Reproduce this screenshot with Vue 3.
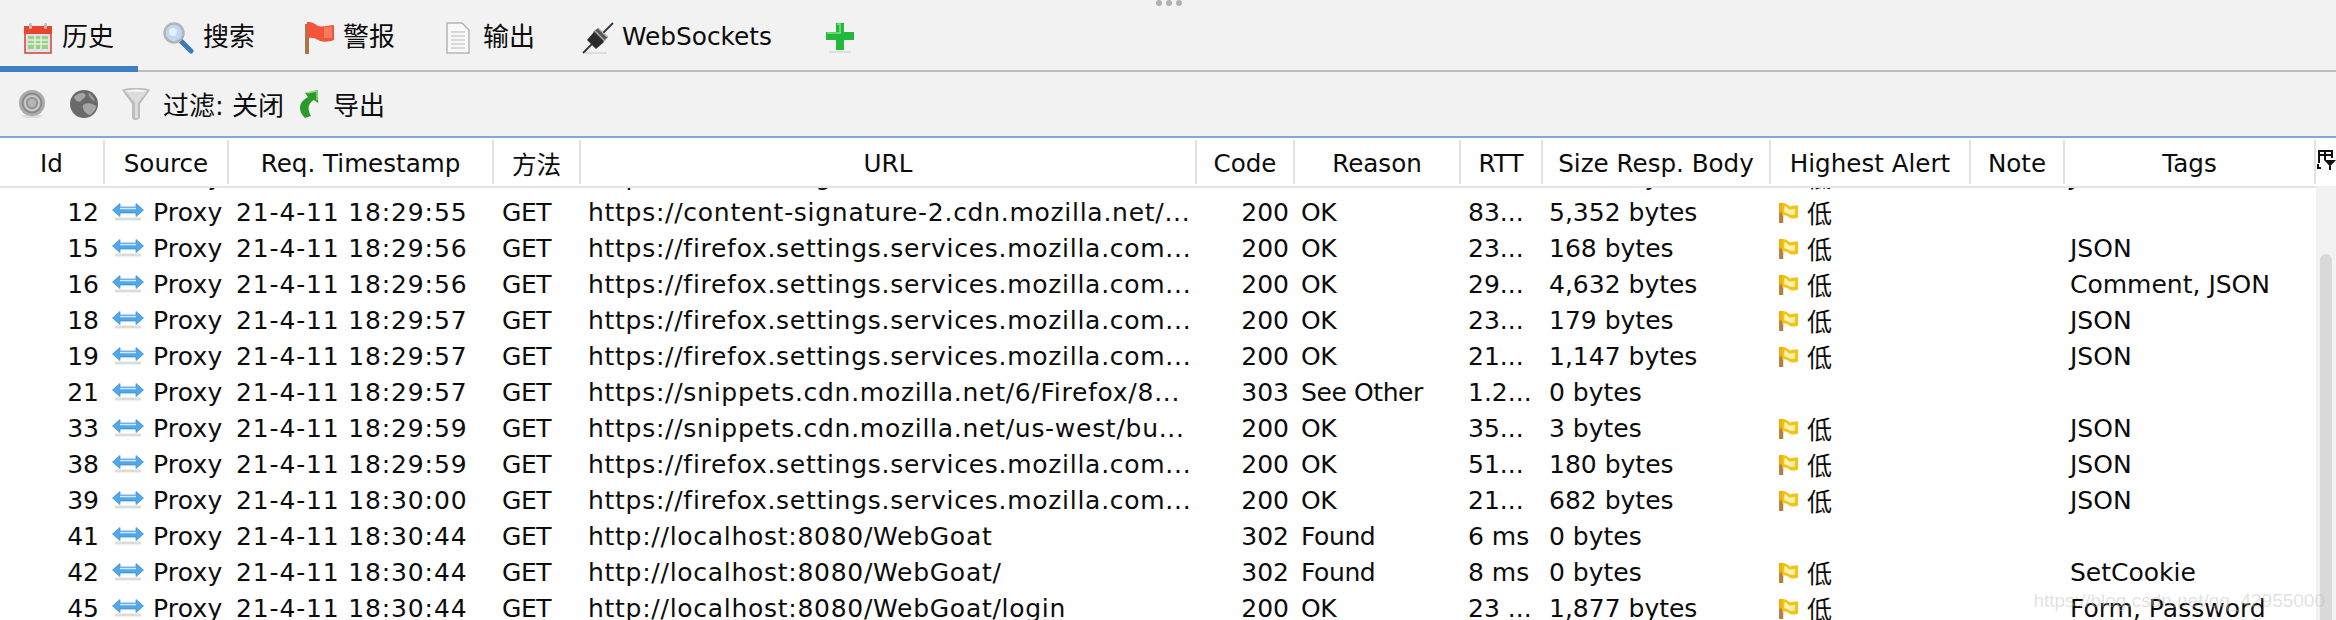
<script setup>
const columns = [
  { label: 'Id', width: 105 }, { label: 'Source', width: 124 }, { label: 'Req. Timestamp', width: 265 },
  { label: '方法', width: 87 }, { label: 'URL', width: 616 }, { label: 'Code', width: 98 },
  { label: 'Reason', width: 166 }, { label: 'RTT', width: 82 }, { label: 'Size Resp. Body', width: 228 },
  { label: 'Highest Alert', width: 200 }, { label: 'Note', width: 94 }, { label: 'Tags', width: 251 },
]
const csu = 'https://content-signature-2.cdn.mozilla.net/...'
const fs = 'https://firefox.settings.services.mozilla.com...'
const rows = [
  ['10', '21-4-11 18:29:55', csu, '200', 'OK', '23...', '5,352 bytes', true, 'JSON'],
  ['12', '21-4-11 18:29:55', csu, '200', 'OK', '83...', '5,352 bytes', true, ''],
  ['15', '21-4-11 18:29:56', fs, '200', 'OK', '23...', '168 bytes', true, 'JSON'],
  ['16', '21-4-11 18:29:56', fs, '200', 'OK', '29...', '4,632 bytes', true, 'Comment, JSON'],
  ['18', '21-4-11 18:29:57', fs, '200', 'OK', '23...', '179 bytes', true, 'JSON'],
  ['19', '21-4-11 18:29:57', fs, '200', 'OK', '21...', '1,147 bytes', true, 'JSON'],
  ['21', '21-4-11 18:29:57', 'https://snippets.cdn.mozilla.net/6/Firefox/8...', '303', 'See Other', '1.2...', '0 bytes', false, ''],
  ['33', '21-4-11 18:29:59', 'https://snippets.cdn.mozilla.net/us-west/bu...', '200', 'OK', '35...', '3 bytes', true, 'JSON'],
  ['38', '21-4-11 18:29:59', fs, '200', 'OK', '51...', '180 bytes', true, 'JSON'],
  ['39', '21-4-11 18:30:00', fs, '200', 'OK', '21...', '682 bytes', true, 'JSON'],
  ['41', '21-4-11 18:30:44', 'http://localhost:8080/WebGoat', '302', 'Found', '6 ms', '0 bytes', false, ''],
  ['42', '21-4-11 18:30:44', 'http://localhost:8080/WebGoat/', '302', 'Found', '8 ms', '0 bytes', true, 'SetCookie'],
  ['45', '21-4-11 18:30:44', 'http://localhost:8080/WebGoat/login', '200', 'OK', '23 ...', '1,877 bytes', true, 'Form, Password'],
]
</script>

<template>
  <div class="app">
    <div class="grip"><i></i><i></i><i></i></div>
    <nav class="tabs">
      <div class="tab t1 active">
        <svg class="ic" viewBox="0 0 28 32"><rect x="1" y="5" width="26" height="26" fill="#dbe6f2" stroke="#d9402c" stroke-width="1.5"/><rect x="0" y="4" width="28" height="8" fill="#e8452c"/><rect x="5" y="1" width="3" height="6" rx="1.500" fill="#bbb"/><rect x="20" y="1" width="3" height="6" rx="1.500" fill="#bbb"/><rect x="4" y="14" width="20" height="13" fill="#9fce8a"/><path d="M4 18h20M4 22h20M11 14v13M17 14v13" stroke="#fff" stroke-width="1"/></svg>
        <span>历史</span>
      </div>
      <div class="tab t2">
        <svg class="ic" viewBox="0 0 32 32"><path d="M18 18l11 11" stroke="#3f78b5" stroke-width="5" stroke-linecap="round"/><circle cx="12" cy="11" r="9.500" fill="#bcd8f5" stroke="#b4b4b4" stroke-width="2.500"/><circle cx="11" cy="10" r="4" fill="#e4f0fc"/></svg>
        <span>搜索</span>
      </div>
      <div class="tab t3">
        <svg class="ic" viewBox="0 0 30 32"><path d="M1 2h4v30H1z" fill="#a9764a"/><path d="M3 0c6 0 8 2 11 4 3 1 8 0 16-1v15c-5 2-10 2-14 1-4-2-6-4-13-3z" fill="#f2553a"/><path d="M20 5h8v11h-8z" fill="#f97a60"/></svg>
        <span>警报</span>
      </div>
      <div class="tab t4">
        <svg class="ic" viewBox="0 0 24 32"><path d="M1 1h15l7 7v23H1z" fill="#f8f8f8" stroke="#b5b5b5" stroke-width="1.500"/><path d="M5 10h14M5 14h14M5 18h14M5 22h14M5 26h14" stroke="#b8b8b8" stroke-width="1.200"/></svg>
        <span>输出</span>
      </div>
      <div class="tab t5">
        <svg class="ic" viewBox="0 0 32 32"><path d="M3 31h22" stroke="#ddd" stroke-width="2"/><path d="M1 31L31 1" stroke="#333" stroke-width="1.800"/><path d="M13 8l5-4 10 9-5 5z" fill="#555" transform="translate(-2 2)"/><path d="M5 18l7-8 10 10-8 7z" fill="#2a2a2a"/><path d="M13 9l10 10M16 6l9 9" stroke="#aaa" stroke-width="1.300"/></svg>
        <span>WebSockets</span>
      </div>
      <div class="tab t6">
        <svg class="ic" viewBox="0 0 28 32"><path d="M3 30h22" stroke="#ddd" stroke-width="2"/><path d="M10 1h8v9h10v8H18v10h-8V18H0v-8h10z" fill="#22b83a"/><path d="M11 2h3v9H1" fill="none" stroke="#7fe08a" stroke-width="1.500"/></svg>
      </div>
    </nav>
    <div class="toolbar">
      <svg class="tic" viewBox="0 0 28 30"><ellipse cx="14" cy="28" rx="11" ry="2" fill="#ddd"/><circle cx="14" cy="14" r="14" fill="#aaa"/><circle cx="14" cy="14" r="11" fill="#8a8a8a"/><circle cx="14" cy="14" r="9" fill="#c6c6c6"/><circle cx="14" cy="14" r="6.500" fill="#8f8f8f"/><circle cx="14" cy="14" r="4.500" fill="#b5b5b5"/></svg>
      <svg class="tic" viewBox="0 0 28 28"><circle cx="14" cy="14" r="14" fill="#6a6a6a"/><path d="M4 7c4-4 8-5 11-3 2 3-2 4-4 7-3 2-6-1-7-4zM13 15c4-3 9-2 13 1 0 4-3 7-6 9-4-1-8-5-7-10z" fill="#a5a5a5"/><path d="M18 3c3 1 6 4 7 8-3 0-6-4-7-8z" fill="#9a9a9a"/></svg>
      <svg class="tic funnel" viewBox="0 0 28 32"><path d="M0 2C5-1 23-1 28 2L18 16v14l-3 2h-3l-2-2V16z" fill="#bdbdbd"/><path d="M3 3c5 2 17 2 22 0L16 15v15h-3V15z" fill="#dcdcdc"/><ellipse cx="14" cy="3" rx="11" ry="1.500" fill="#f2f2f2"/></svg>
      <span class="filter">过滤: 关闭</span>
      <svg class="tic arrow" viewBox="0 0 18 28"><path d="M5 28C-3 20-1 12 8 7L5 3l13-3v13l-4-3C8 13 7 19 11 26z" fill="#2b9a2b"/><path d="M7 3l10-2v9" fill="none" stroke="#8bdc7c" stroke-width="1.500"/></svg>
      <span class="export">导出</span>
    </div>
    <div class="head">
      <div v-for="c in columns" :key="c.label" class="hcell" :style="{ width: c.width + 'px' }">{{ c.label }}</div>
      <svg class="cols" viewBox="0 0 19 20"><path d="M2 13V1h13v7M2 5h13M8 1v9M1 14v4h3" fill="none" stroke="#111" stroke-width="2"/><path d="M7 10h12l-6 6.500z" fill="#111"/><path d="M12 16h2v4h-2z" fill="#111"/></svg>
    </div>
    <div class="sep"></div>
    <div class="body">
      <div class="rows">
        <div v-for="r in rows" :key="r[0]" class="row">
          <div class="c id">{{ r[0] }}</div>
          <div class="c src">
            <svg class="arr" viewBox="0 0 32 18"><path d="M3 16h26" stroke="#ddd" stroke-width="3"/><path d="M.5 7L8 .5V4h16V.5L31.500 7 24 13.500V10H8v3.500z" fill="#4fa8ee" stroke="#3d86c8" stroke-width=".7"/><path d="M8 5.500h16" stroke="#cfe9ff" stroke-width="1.600"/></svg><span class="px">Proxy</span>
          </div>
          <div class="c ts">{{ r[1] }}</div>
          <div class="c me">GET</div>
          <div class="c url">{{ r[2] }}</div>
          <div class="c code">{{ r[3] }}</div>
          <div class="c rea">{{ r[4] }}</div>
          <div class="c rtt">{{ r[5] }}</div>
          <div class="c size">{{ r[6] }}</div>
          <div class="c alert">
            <template v-if="r[7]">
              <svg class="flag" viewBox="0 0 20 20"><path d="M1 1h4v19H1z" fill="#b5803f"/><path d="M1 1h4v9H1z" fill="#eeb20e"/><path d="M4 1c3 0 5 1 7 3 2 0 5-1 8-1v12c-3 1-6 1-8 0-2-2-4-3-7-2z" fill="#f3c30f"/><path d="M6 4c2 0 3 1 4 3 2 .5 4 0 6-.5V12c-2 .5-4 .5-6-.5-1-1-2-1.500-4-1.500z" fill="#fff3b5"/></svg><span>低</span>
            </template>
          </div>
          <div class="c note"></div>
          <div class="c tags">{{ r[8] }}</div>
        </div>
      </div>
      <div class="track"><div class="thumb"></div></div>
    </div>
    <div class="wm">https://blog.csdn.net/qq_42955000</div>
  </div>
</template>

<style>
html, body { margin: 0; background: #fff; }
</style>

<style scoped>
.app { position: relative; width: 2336px; height: 620px; overflow: hidden; background: #f2f2f2; display: flex; flex-direction: column; font-family: "DejaVu Sans", "Noto Sans CJK SC", sans-serif; color: #0c0c0c; font-size: 25px; }
.grip { position: absolute; left: 1156px; top: 0; display: flex; gap: 4px; }
.grip i { width: 6px; height: 6px; border-radius: 50%; background: #b0b0b0; }
.tabs { height: 72px; box-sizing: border-box; border-bottom: 2px solid #bdbdbd; display: flex; align-items: flex-start; padding-top: 22px; font-size: 26px; }
.tab { display: flex; align-items: center; height: 32px; flex: none; box-sizing: border-box; position: relative; }
.tab span { line-height: 30px; margin-bottom: 2px; }
.tab .ic { height: 32px; flex: none; }
.tab.active::after { content: ""; position: absolute; left: 0; right: 0; top: 44px; height: 6px; background: #3f7fc4; }
.t1 { width: 138px; padding-left: 24px; gap: 10px; }
.t1 .ic { width: 28px; }
.t2 { width: 141px; padding-left: 24px; gap: 9px; }
.t2 .ic { width: 32px; }
.t3 { width: 139px; padding-left: 25px; gap: 9px; }
.t3 .ic { width: 30px; }
.t4 { width: 140px; padding-left: 28px; gap: 13px; }
.t4 .ic { width: 24px; }
.t5 { width: 237px; padding-left: 24px; gap: 8px; font-size: 24.800px; }
.t5 .ic { width: 32px; }
.t6 { padding-left: 31px; }
.t6 .ic { width: 28px; }
.toolbar { height: 64px; display: flex; align-items: center; padding-left: 18px; font-size: 26px; }
.filter, .export { margin-bottom: 2px; }
.tic { width: 28px; height: 28px; flex: none; margin-right: 24px; }
.tic.funnel { height: 32px; margin-right: 13px; }
.filter { width: 137px; flex: none; white-space: nowrap; }
.tic.arrow { width: 18px; margin-right: 15px; }
.head { height: 48px; border-top: 2px solid #83a8d8; background: #fff; display: flex; align-items: center; font-size: 24.600px; }
.hcell { flex: none; box-sizing: border-box; height: 44px; padding-top: 2px; display: flex; align-items: center; justify-content: center; border-right: 2px solid #e2e2e2; white-space: nowrap; }
.cols { width: 19px; height: 20px; flex: none; margin-left: 1px; margin-bottom: 4px; }
.sep { height: 2px; background: #e4e4e4; border-right: 20px solid #f2f2f2; }
.body { flex: 1; min-height: 0; display: flex; background: #fff; overflow: hidden; }
.rows { flex: 1; min-width: 0; margin-top: -30px; }
.row { display: flex; height: 36px; align-items: center; white-space: nowrap; }
.c { flex: none; box-sizing: border-box; overflow: hidden; }
.id { width: 105px; text-align: right; padding-right: 6px; }
.src { width: 124px; display: flex; align-items: center; padding-left: 7px; }
.arr { width: 32px; height: 18px; margin-right: 9px; flex: none; }
.px { letter-spacing: .2px; }
.ts { width: 265px; padding-left: 7px; letter-spacing: .85px; }
.me { width: 87px; padding-left: 8px; letter-spacing: -.4px; }
.url { width: 616px; padding-left: 7px; letter-spacing: .72px; }
.code { width: 98px; text-align: right; padding-right: 6px; }
.rea { width: 166px; padding-left: 6px; letter-spacing: -.4px; }
.rtt { width: 82px; padding-left: 7px; }
.size { width: 228px; padding-left: 6px; }
.alert { width: 200px; display: flex; align-items: center; padding-left: 7px; }
.flag { width: 21px; height: 21px; margin-right: 8px; flex: none; }
.note { width: 94px; }
.tags { width: 250px; padding-left: 5px; }
.track { width: 20px; flex: none; background: #f2f2f2; position: relative; }
.thumb { position: absolute; left: 4px; top: 66px; width: 12px; bottom: -10px; border-radius: 6px; background: #d9d9d9; }
.wm { position: absolute; right: 11px; top: 590px; font-family: "Liberation Sans", sans-serif; font-size: 19px; color: rgba(190,190,190,.45); }
</style>
